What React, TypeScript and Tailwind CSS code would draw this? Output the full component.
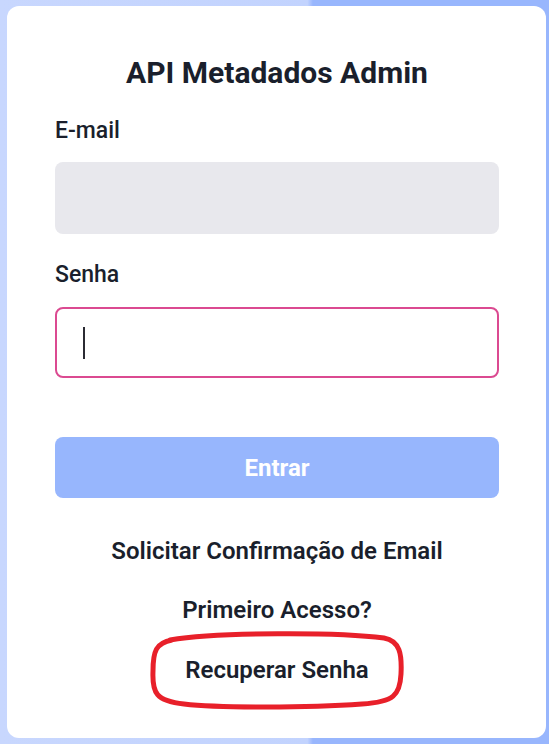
import React from "react";

export default function App() {
  return (
    <div
      className="w-full h-[744px] pt-[6px] pb-[6px] pl-[7px] pr-[3px] bg-[linear-gradient(90deg,#c8d7fe_0%,#c2d3fe_56%,#98b6fd_57%,#98b6fd_100%)]"
      style={{ fontFamily: "Roboto, 'Noto Sans', sans-serif" }}
    >
      <div className="h-full w-full bg-white rounded-[12px] pl-[48px] pr-[47px] pt-[49px] flex flex-col text-[#1a1f2c]">
        <h1 className="text-center text-[30px] leading-[36px] font-bold">API Metadados Admin</h1>

        <label className="mt-[26px] block text-[23px] leading-[28px] font-medium">E-mail</label>
        <div className="mt-[17px] h-[72px] rounded-[8px] bg-[#e8e8ed]" />

        <label className="mt-[27px] block text-[23px] leading-[28px] font-medium">Senha</label>
        <div className="mt-[18px] h-[71px] rounded-[8px] border-2 border-[#db4a91] flex items-center pl-[26px]">
          <div className="w-[2px] h-[32px] bg-[#2b2b33]" />
        </div>

        <button className="mt-[59px] h-[61px] rounded-[8px] bg-[#97b6fd] text-white text-[24px] font-bold">
          Entrar
        </button>

        <div className="mt-[39px] text-center text-[24px] leading-[28px] font-semibold">
          Solicitar Confirmação de Email
        </div>
        <div className="mt-[31px] text-center text-[24px] leading-[28px] font-semibold">Primeiro Acesso?</div>
        <div className="mt-[32px] flex justify-center">
          <div className="relative text-[24px] leading-[28px] font-semibold">
            Recuperar Senha
            <svg
              className="absolute left-1/2 top-1/2 -translate-x-1/2 -translate-y-1/2 pointer-events-none"
              width="258"
              height="82"
              viewBox="0 0 258 82"
              fill="none"
            >
              <path
                d="M 22,11 C 70,3 190,3 236,9 C 252,12 254,25 253,45 C 252,66 246,73 214,75 C 160,79 70,79 36,75 C 8,72 4,64 5,42 C 5,22 8,14 24,11"
                stroke="#e8202a"
                strokeWidth="5"
                strokeLinecap="round"
                strokeLinejoin="round"
              />
            </svg>
          </div>
        </div>
      </div>
    </div>
  );
}
